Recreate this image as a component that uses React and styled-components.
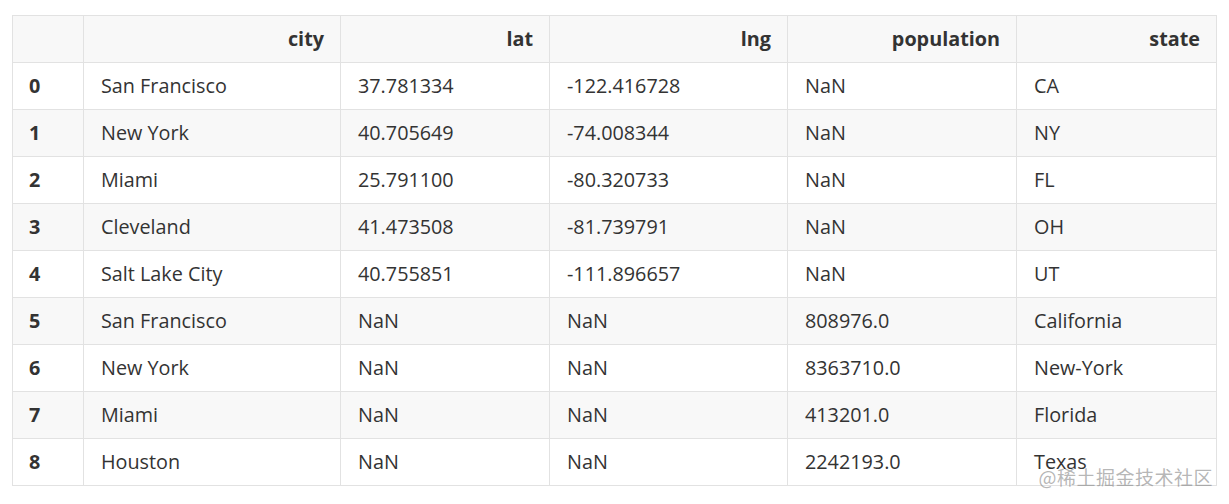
import React from 'react';
import styled, { createGlobalStyle } from 'styled-components';

const GlobalStyle = createGlobalStyle`
  body {
    margin: 0;
    background: #fff;
    font-family: "Open Sans", "Noto Sans", sans-serif;
  }
`;

const columns = [
  { key: 'idx', label: '', width: 71 },
  { key: 'city', label: 'city', width: 257 },
  { key: 'lat', label: 'lat', width: 209 },
  { key: 'lng', label: 'lng', width: 238 },
  { key: 'population', label: 'population', width: 229 },
  { key: 'state', label: 'state', width: 200 },
];

const rows = [
  ['0', 'San Francisco', '37.781334', '-122.416728', 'NaN', 'CA'],
  ['1', 'New York', '40.705649', '-74.008344', 'NaN', 'NY'],
  ['2', 'Miami', '25.791100', '-80.320733', 'NaN', 'FL'],
  ['3', 'Cleveland', '41.473508', '-81.739791', 'NaN', 'OH'],
  ['4', 'Salt Lake City', '40.755851', '-111.896657', 'NaN', 'UT'],
  ['5', 'San Francisco', 'NaN', 'NaN', '808976.0', 'California'],
  ['6', 'New York', 'NaN', 'NaN', '8363710.0', 'New-York'],
  ['7', 'Miami', 'NaN', 'NaN', '413201.0', 'Florida'],
  ['8', 'Houston', 'NaN', 'NaN', '2242193.0', 'Texas'],
];

const App = () => (
  <>
    <GlobalStyle />
    <Page>
      <Table>
        <colgroup>
          {columns.map((c) => (
            <col key={c.key} style={{ width: c.width }} />
          ))}
        </colgroup>
        <thead>
          <HeadRow>
            {columns.map((c) => (
              <HeadCell key={c.key}>{c.label}</HeadCell>
            ))}
          </HeadRow>
        </thead>
        <tbody>
          {rows.map((r, i) => (
            <BodyRow key={r[0]} $striped={i % 2 === 1}>
              {r.map((v, j) =>
                j === 0 ? <IndexCell key={j}>{v}</IndexCell> : <Cell key={j}>{v}</Cell>
              )}
            </BodyRow>
          ))}
        </tbody>
      </Table>
      <Watermark>@稀土掘金技术社区</Watermark>
    </Page>
  </>
);

const Page = styled.div`
  position: relative;
  width: 1229px;
  height: 504px;
  padding: 15px 0 0 12px;
  box-sizing: border-box;
`;

const Table = styled.table`
  border-collapse: collapse;
  table-layout: fixed;
  width: 1205px;
  color: #333;
  font-size: 19.8px;
`;

const HeadRow = styled.tr`
  background: #f8f8f8;
  height: 47px;
`;

const HeadCell = styled.th`
  border: 1px solid #e2e2e2;
  text-align: right;
  font-weight: 700;
  padding: 0 16px 2px;
  white-space: nowrap;
`;

const BodyRow = styled.tr`
  height: 47px;
  background: ${(p) => (p.$striped ? '#f8f8f8' : '#fff')};
`;

const Cell = styled.td`
  border: 1px solid #e2e2e2;
  text-align: left;
  padding: 0 16px 2px 17px;
  white-space: nowrap;
`;

const IndexCell = styled(Cell)`
  font-weight: 700;
  padding-left: 16px;
`;

const Watermark = styled.div`
  position: absolute;
  right: 16px;
  bottom: 14px;
  font-family: "Noto Sans CJK SC", sans-serif;
  font-size: 19px;
  color: rgba(120, 120, 120, 0.55);
  letter-spacing: 0.5px;
`;

export default App;
